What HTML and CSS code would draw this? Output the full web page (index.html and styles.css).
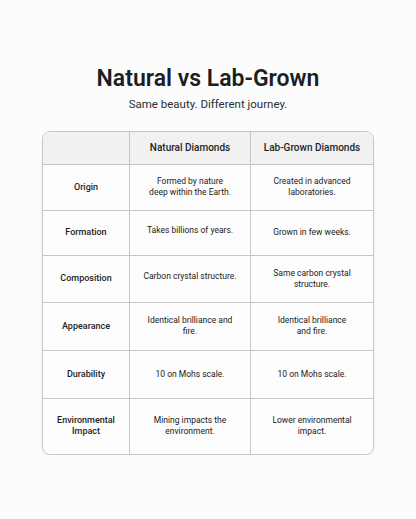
FILE: index.html
```html
<!DOCTYPE html>
<html lang="en">
<head>
    <meta charset="UTF-8">
    <meta name="viewport" content="width=device-width, initial-scale=1.0">
    <title>Natural vs Lab-Grown</title>
    <link rel="stylesheet" href="styles.css">
</head>
<body>

    <header class="intro">
        <h1>Natural vs Lab-Grown</h1>
        <p>Same beauty. Different journey.</p>
    </header>

    <!-- comparison table -->
    <div class="compare">
        <table>
            <thead>
                <tr class="r-head">
                    <th></th>
                    <th>Natural Diamonds</th>
                    <th>Lab-Grown Diamonds</th>
                </tr>
            </thead>
            <tbody>
                <tr class="r-origin">
                    <th>Origin</th>
                    <td>Formed by nature<br>deep within the Earth.</td>
                    <td>Created in advanced<br>laboratories.</td>
                </tr>
                <tr class="r-formation">
                    <th>Formation</th>
                    <td class="up">Takes billions of years.</td>
                    <td>Grown in few weeks.</td>
                </tr>
                <tr class="r-comp">
                    <th>Composition</th>
                    <td class="up">Carbon crystal structure.</td>
                    <td>Same carbon crystal<br>structure.</td>
                </tr>
                <tr class="r-look">
                    <th>Appearance</th>
                    <td>Identical brilliance and<br>fire.</td>
                    <td>Identical brilliance<br>and fire.</td>
                </tr>
                <tr class="r-dura">
                    <th>Durability</th>
                    <td>10 on Mohs scale.</td>
                    <td>10 on Mohs scale.</td>
                </tr>
                <tr class="r-env">
                    <th>Environmental<br>Impact</th>
                    <td>Mining impacts the<br>environment.</td>
                    <td>Lower environmental<br>impact.</td>
                </tr>
            </tbody>
        </table>
    </div>

</body>
</html>
```

FILE: styles.css
```css
body {
    font-family: 'Roboto', 'Liberation Sans', sans-serif;
    margin: 0;
    padding: 0;
    background-color: #fcfcfc;
    color: #1b1f24;
}
.intro {
    text-align: center;
    padding-top: 65px;
}
.intro h1 {
    margin: 0;
    font-size: 23px;
    font-weight: 600;
    line-height: 28px;
}
.intro p {
    margin: 4px 0 0;
    font-size: 11.5px;
    color: #2a2d31;
    line-height: 14px;
}
.compare {
    width: 330px;
    margin: 20px auto 0;
    border: 1px solid #c6c6c6;
    border-radius: 8px;
    overflow: hidden;
    background-color: #fdfdfd;
    box-shadow: 0 6px 10px rgba(0,0,0,0.03);
}
table {
    width: 100%;
    border-collapse: collapse;
    table-layout: fixed;
}
th, td {
    text-align: center;
    font-size: 8.5px;
    line-height: 11px;
    padding: 0 4px;
    border-right: 1px solid #c6c6c6;
    border-bottom: 1px solid #c6c6c6;
    color: #222;
}
th:last-child, td:last-child {
    border-right: none;
}
tbody tr:last-child th, tbody tr:last-child td {
    border-bottom: none;
}
thead th {
    background-color: #f1f1f1;
    font-size: 10px;
    font-weight: 500;
    color: #1b1f24;
}
thead th:first-child {
    width: 78px;
}
thead th:nth-child(2) {
    width: 112px;
}
tbody th {
    font-size: 9px;
    font-weight: 500;
    color: #1b1f24;
}
td {
    font-weight: 400;
}
td.up {
    padding-bottom: 5px;
}
.r-head { height: 32px; }
.r-origin { height: 46px; }
.r-formation { height: 45px; }
.r-comp { height: 47px; }
.r-look { height: 48px; }
.r-dura { height: 48px; }
.r-env { height: 56px; }
```
